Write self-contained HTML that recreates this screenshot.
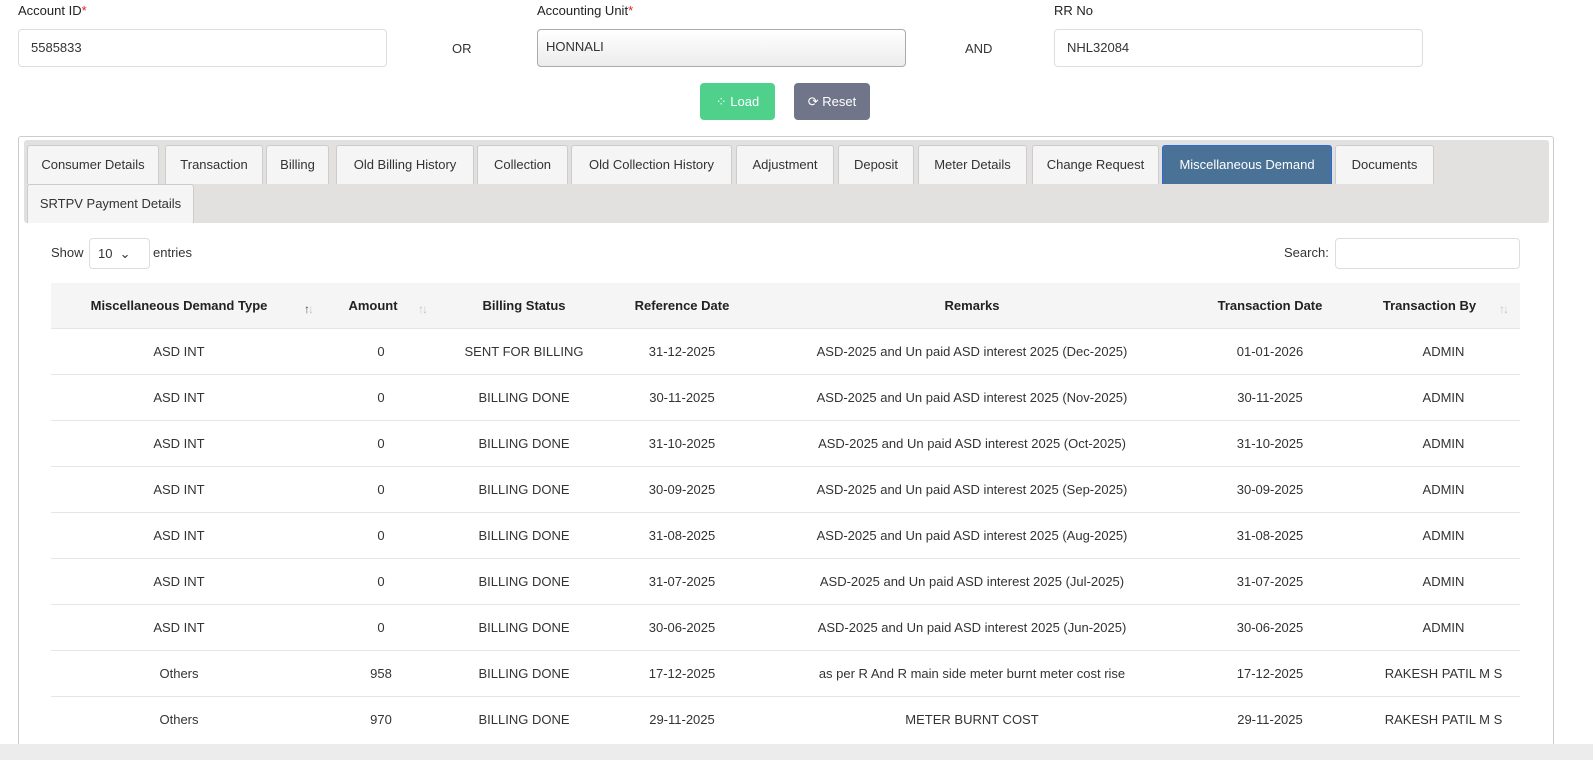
<!DOCTYPE html>
<html><head><meta charset="utf-8"><style>
*{box-sizing:border-box;margin:0;padding:0}
html,body{width:1593px;height:760px;overflow:hidden;background:#fff}
body{font-family:"Liberation Sans",sans-serif;font-size:13px;color:#333}
#w{position:relative;width:1593px;height:760px;overflow:hidden}
.a{position:absolute}
.lbl{font-size:13px;color:#222}
.lbl i{color:#e02020;font-style:normal}
.inp{border:1px solid #ddd;border-radius:4px;height:38px;padding:0 12px;line-height:36px;font-size:13px}
.tab{position:absolute;height:39px;line-height:38px;border:1px solid #ccc;border-bottom:none;background:#f5f5f5;border-radius:3px 3px 0 0;text-align:center;font-size:13px;color:#333}
.tab.act{background:#4a7196;color:#fff;border-color:#2a6adf}
table{position:absolute;left:51px;top:283px;border-collapse:collapse;width:1469px;table-layout:fixed}
th{height:45px;background:#f5f5f5;font-weight:bold;font-size:13px;color:#222;text-align:center}
td{height:46px;border-top:1px solid #e6e6e6;text-align:center;color:#333}
.s{position:absolute;font-size:12px;color:#c4c4c4;letter-spacing:-2px}
</style></head><body><div id="w">
<div class="a lbl" style="left:18px;top:3px">Account ID<i>*</i></div>
<div class="a lbl" style="left:537px;top:3px">Accounting Unit<i>*</i></div>
<div class="a lbl" style="left:1054px;top:3px">RR No</div>
<div class="a inp" style="left:18px;top:29px;width:369px">5585833</div>
<div class="a" style="left:452px;top:41px">OR</div>
<div class="a inp" style="left:537px;top:29px;width:369px;border-color:#aaa;background:linear-gradient(#fff,#ececec);padding-left:8px;line-height:34px">HONNALI</div>
<div class="a" style="left:965px;top:41px">AND</div>
<div class="a inp" style="left:1054px;top:29px;width:369px">NHL32084</div>
<div class="a" style="left:700px;top:83px;width:75px;height:37px;background:#4fd18b;border-radius:4px;color:#fff;line-height:37px;text-align:center">⁘ Load</div>
<div class="a" style="left:794px;top:83px;width:76px;height:37px;background:#717589;border-radius:4px;color:#fff;line-height:37px;text-align:center">⟳ Reset</div>
<div class="a" style="left:18px;top:136px;width:1536px;height:624px;border:1px solid #ccc;border-bottom:none;border-radius:3px 3px 0 0"></div>
<div class="a" style="left:24px;top:140px;width:1525px;height:83px;background:#e3e0e0;border-radius:3px"></div>
<div class="tab" style="left:27px;top:145px;width:132px">Consumer Details</div>
<div class="tab" style="left:165px;top:145px;width:98px">Transaction</div>
<div class="tab" style="left:266px;top:145px;width:63px">Billing</div>
<div class="tab" style="left:336px;top:145px;width:138px">Old Billing History</div>
<div class="tab" style="left:477px;top:145px;width:91px">Collection</div>
<div class="tab" style="left:571px;top:145px;width:161px">Old Collection History</div>
<div class="tab" style="left:736px;top:145px;width:98px">Adjustment</div>
<div class="tab" style="left:838px;top:145px;width:76px">Deposit</div>
<div class="tab" style="left:918px;top:145px;width:109px">Meter Details</div>
<div class="tab" style="left:1032px;top:145px;width:127px">Change Request</div>
<div class="tab act" style="left:1162px;top:145px;width:170px">Miscellaneous Demand</div>
<div class="tab" style="left:1335px;top:145px;width:99px">Documents</div>
<div class="tab" style="left:27px;top:184px;width:167px">SRTPV Payment Details</div>
<div class="a" style="left:51px;top:245px">Show</div>
<div class="a" style="left:89px;top:238px;width:61px;height:31px;border:1px solid #ddd;border-radius:4px;padding-left:8px;line-height:29px">10 &nbsp;&#8964;</div>
<div class="a" style="left:153px;top:245px">entries</div>
<div class="a" style="left:1284px;top:245px">Search:</div>
<div class="a" style="left:1335px;top:238px;width:185px;height:31px;border:1px solid #ddd;border-radius:4px"></div>
<table>
<colgroup><col style="width:256px"><col style="width:148px"><col style="width:138px"><col style="width:178px"><col style="width:402px"><col style="width:194px"><col style="width:153px"></colgroup>
<tr><th>Miscellaneous Demand Type</th><th style="padding-right:16px">Amount</th><th>Billing Status</th><th>Reference Date</th><th>Remarks</th><th>Transaction Date</th><th style="padding-right:28px">Transaction By</th></tr>
<tr><td>ASD INT</td><td>0</td><td>SENT FOR BILLING</td><td>31-12-2025</td><td>ASD-2025 and Un paid ASD interest 2025 (Dec-2025)</td><td>01-01-2026</td><td>ADMIN</td></tr>
<tr><td>ASD INT</td><td>0</td><td>BILLING DONE</td><td>30-11-2025</td><td>ASD-2025 and Un paid ASD interest 2025 (Nov-2025)</td><td>30-11-2025</td><td>ADMIN</td></tr>
<tr><td>ASD INT</td><td>0</td><td>BILLING DONE</td><td>31-10-2025</td><td>ASD-2025 and Un paid ASD interest 2025 (Oct-2025)</td><td>31-10-2025</td><td>ADMIN</td></tr>
<tr><td>ASD INT</td><td>0</td><td>BILLING DONE</td><td>30-09-2025</td><td>ASD-2025 and Un paid ASD interest 2025 (Sep-2025)</td><td>30-09-2025</td><td>ADMIN</td></tr>
<tr><td>ASD INT</td><td>0</td><td>BILLING DONE</td><td>31-08-2025</td><td>ASD-2025 and Un paid ASD interest 2025 (Aug-2025)</td><td>31-08-2025</td><td>ADMIN</td></tr>
<tr><td>ASD INT</td><td>0</td><td>BILLING DONE</td><td>31-07-2025</td><td>ASD-2025 and Un paid ASD interest 2025 (Jul-2025)</td><td>31-07-2025</td><td>ADMIN</td></tr>
<tr><td>ASD INT</td><td>0</td><td>BILLING DONE</td><td>30-06-2025</td><td>ASD-2025 and Un paid ASD interest 2025 (Jun-2025)</td><td>30-06-2025</td><td>ADMIN</td></tr>
<tr><td>Others</td><td>958</td><td>BILLING DONE</td><td>17-12-2025</td><td>as per R And R main side meter burnt meter cost rise</td><td>17-12-2025</td><td>RAKESH PATIL M S</td></tr>
<tr><td>Others</td><td>970</td><td>BILLING DONE</td><td>29-11-2025</td><td>METER BURNT COST</td><td>29-11-2025</td><td>RAKESH PATIL M S</td></tr>
</table>
<div class="s" style="left:304px;top:302px"><span style="color:#555">↑</span>↓</div>
<div class="s" style="left:418px;top:302px">↑↓</div>
<div class="s" style="left:1499px;top:302px">↑↓</div>
<div class="a" style="left:0;top:744px;width:1593px;height:16px;background:#ececec"></div>
</div></body></html>
